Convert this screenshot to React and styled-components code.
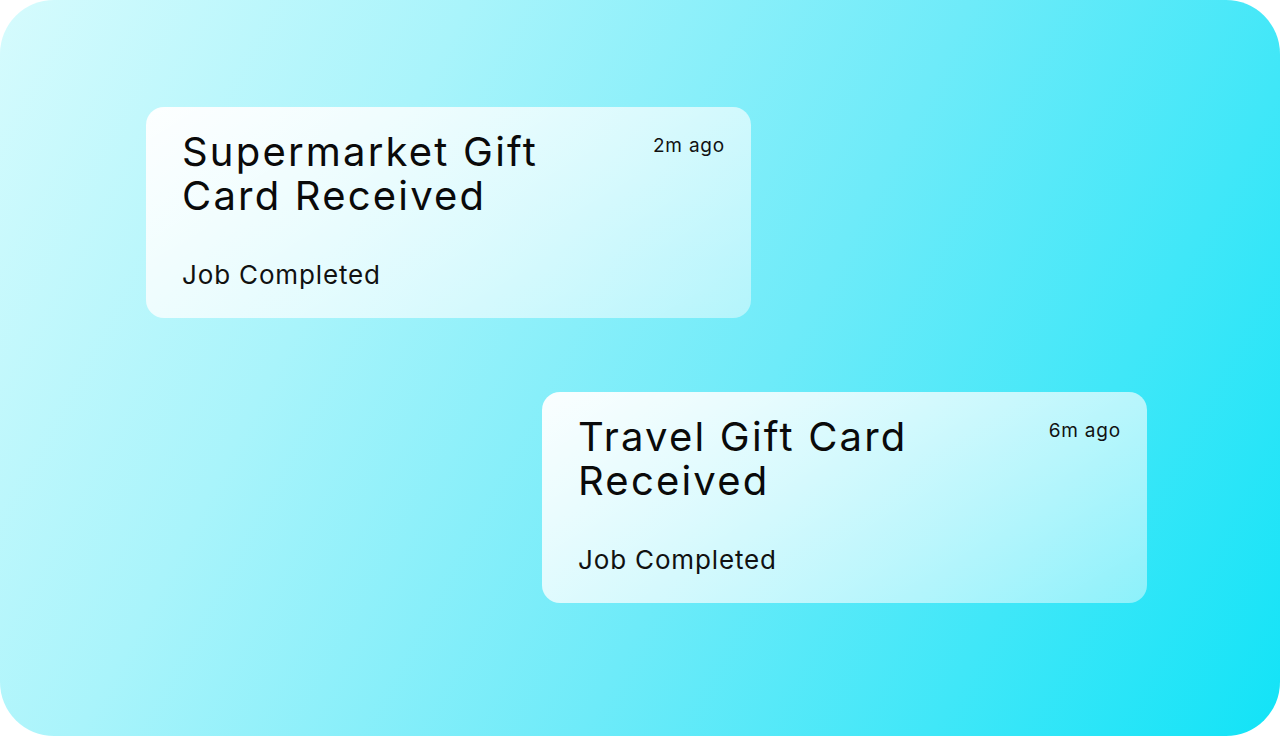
import React from 'react';
import styled, { createGlobalStyle } from 'styled-components';

const GlobalStyle = createGlobalStyle`
  html, body {
    margin: 0;
    padding: 0;
    background: #ffffff;
  }
  body {
    font-family: Inter, "Noto Sans", sans-serif;
    -webkit-font-smoothing: antialiased;
  }
`;

const Stage = styled.div`
  width: 1280px;
  height: 736px;
  box-sizing: border-box;
  border-radius: 54px;
  overflow: hidden;
  padding-top: 107px;
  display: flex;
  flex-direction: column;
  gap: 74px;
  background: linear-gradient(118deg, #d6fbfd 0%, #a9f4fb 28%, #6eebf9 58%, #12e3f7 100%);
`;

const Card = styled.div`
  width: 605px;
  height: 211px;
  box-sizing: border-box;
  margin-left: ${props => props.offset}px;
  padding: 23px 26px 27px 36px;
  border-radius: 18px;
  display: flex;
  flex-direction: column;
  background: linear-gradient(150deg, rgba(255, 255, 255, 0.96) 0%, rgba(255, 255, 255, 0.72) 45%, rgba(255, 255, 255, 0.45) 100%);
`;

const TopRow = styled.div`
  display: flex;
  justify-content: space-between;
  align-items: flex-start;
`;

const Title = styled.h2`
  margin: 0;
  width: 430px;
  font-size: 40px;
  line-height: 44px;
  font-weight: 400;
  color: #0a0a0a;
  letter-spacing: 2.2px;
`;

const Time = styled.span`
  margin-top: 4px;
  font-size: 19px;
  line-height: 24px;
  letter-spacing: 0.8px;
  color: #111;
`;

const Status = styled.div`
  margin-top: auto;
  font-size: 26px;
  line-height: 32px;
  letter-spacing: 0.85px;
  color: #111;
`;

const notifications = [
  { title: 'Supermarket Gift Card Received', time: '2m ago', status: 'Job Completed', offset: 146 },
  { title: 'Travel Gift Card Received', time: '6m ago', status: 'Job Completed', offset: 542 },
];

export default function App() {
  return (
    <>
      <GlobalStyle />
      <Stage>
        {notifications.map(n => (
          <Card key={n.title} offset={n.offset}>
            <TopRow>
              <Title>{n.title}</Title>
              <Time>{n.time}</Time>
            </TopRow>
            <Status>{n.status}</Status>
          </Card>
        ))}
      </Stage>
    </>
  );
}
